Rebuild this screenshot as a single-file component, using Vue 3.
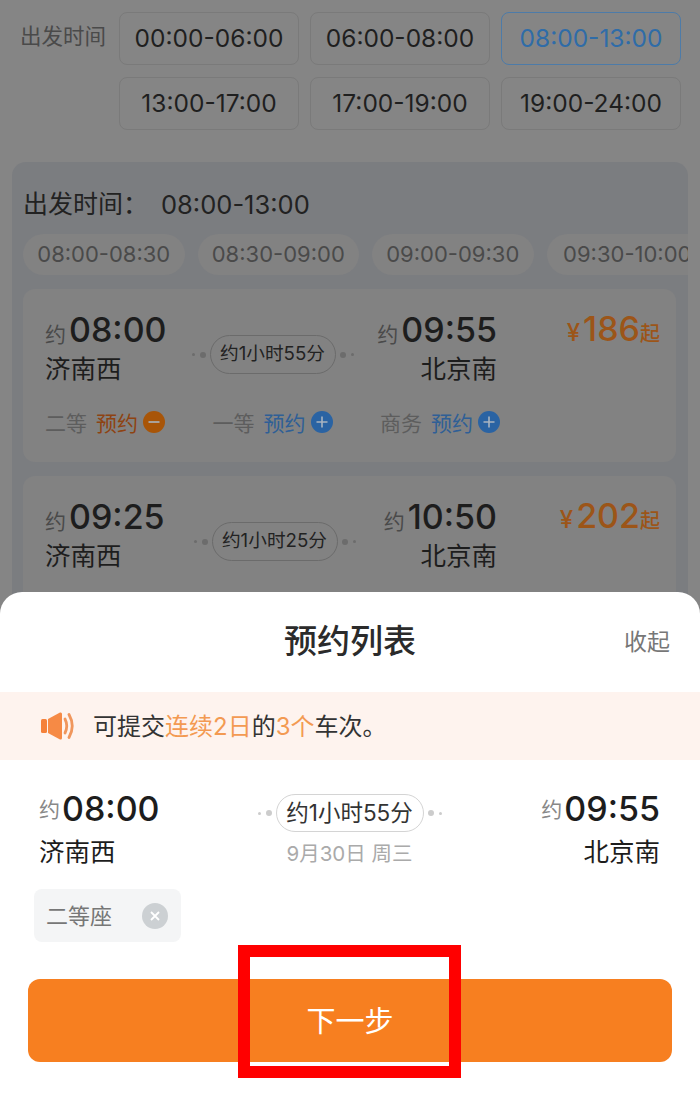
<script setup>
const slots = [
  { t: '00:00-06:00' }, { t: '06:00-08:00' }, { t: '08:00-13:00', on: true },
  { t: '13:00-17:00' }, { t: '17:00-19:00' }, { t: '19:00-24:00' }
]
const chips = ['08:00-08:30', '08:30-09:00', '09:00-09:30', '09:30-10:00']
const trains = [
  { dep: '08:00', arr: '09:55', dur: '约1小时55分', price: '186', seats: [
    { n: '二等', on: true }, { n: '一等' }, { n: '商务' }
  ] },
  { dep: '09:25', arr: '10:50', dur: '约1小时25分', price: '202', shift: true, seats: [] }
]
</script>

<template>
  <div class="page">
    <div class="filter">
      <div class="filter-label">出发时间</div>
      <div class="slots">
        <div v-for="s in slots" :key="s.t" class="slot" :class="{ on: s.on }">{{ s.t }}</div>
      </div>
    </div>

    <section class="panel">
      <div class="panel-title"><span>出发时间：</span><span>08:00-13:00</span></div>
      <div class="chips">
        <div v-for="c in chips" :key="c" class="chip">{{ c }}</div>
      </div>
      <article v-for="t in trains" :key="t.dep" class="card">
        <div class="route">
          <div class="stop">
            <div class="time"><small>约</small>{{ t.dep }}</div>
            <div class="station">济南西</div>
          </div>
          <div class="duration" :class="{ shift: t.shift }">
            <i class="dots"></i><span class="pill">{{ t.dur }}</span><i class="dots flip"></i>
          </div>
          <div class="stop end">
            <div class="time"><small>约</small>{{ t.arr }}</div>
            <div class="station">北京南</div>
          </div>
          <div class="price"><small class="yen">¥</small>{{ t.price }}<small>起</small></div>
        </div>
        <div v-if="t.seats.length" class="seats">
          <div v-for="s in t.seats" :key="s.n" class="seat" :class="{ on: s.on }">
            <span class="seat-name">{{ s.n }}</span>
            <span class="seat-act">预约</span>
            <svg class="seat-icon" viewBox="0 0 22 22">
              <circle cx="11" cy="11" r="11" :fill="s.on ? '#a85508' : '#2a63a3'" />
              <path :d="s.on ? 'M5.5 11h11' : 'M5.5 11h11M11 5.5v11'" stroke="#a9b4c0" stroke-width="1.6" fill="none" />
            </svg>
          </div>
        </div>
      </article>
    </section>

    <div class="sheet">
      <header class="sheet-head">
        <h2>预约列表</h2>
        <span class="collapse">收起</span>
      </header>
      <div class="notice">
        <svg class="speaker" viewBox="0 0 36 30">
          <rect x="1" y="8" width="6" height="14" rx="1.5" fill="#f5813a" />
          <path d="M8 8 L20 1.5 Q22 1 22 3 V27 Q22 29 20 28.5 L8 22 Z" fill="#f68a45" />
          <path d="M25 8 Q28.5 15 25 22" stroke="#f0965c" stroke-width="2.8" fill="none" stroke-linecap="round" />
          <path d="M29 3.5 Q35.5 15 29 26.5" stroke="#f0965c" stroke-width="2.8" fill="none" stroke-linecap="round" />
        </svg>
        <span>可提交<em>连续2日</em>的<em>3个</em>车次。</span>
      </div>
      <div class="trip">
        <div class="stop">
          <div class="time"><small>约</small>08:00</div>
          <div class="station">济南西</div>
        </div>
        <div class="trip-mid">
          <div class="duration big">
            <i class="dots"></i><span class="pill">约1小时55分</span><i class="dots flip"></i>
          </div>
          <div class="date">9月30日 周三</div>
        </div>
        <div class="stop end">
          <div class="time"><small>约</small>09:55</div>
          <div class="station">北京南</div>
        </div>
      </div>
      <div class="tag">
        <span>二等座</span>
        <svg class="tag-x" viewBox="0 0 26 26">
          <circle cx="13" cy="13" r="13" fill="#ccd0d3" />
          <path d="M9 9l8 8M17 9l-8 8" stroke="#fff" stroke-width="1.8" fill="none" />
        </svg>
      </div>
      <button class="next">下一步</button>
    </div>

    <div class="mark"></div>
  </div>
</template>

<style scoped>
.page {
  position: relative;
  width: 700px;
  height: 1100px;
  overflow: hidden;
  background: #858585;
  font-family: "Inter", "Noto Sans CJK SC", sans-serif;
  color: #222;
}
.filter {
  display: flex;
  padding: 12px 0 0 20px;
}
.filter-label {
  flex: 0 0 99px;
  padding-top: 9px;
  font-size: 21.5px;
  line-height: 30px;
  color: #4a4a4a;
  white-space: nowrap;
}
.slots {
  display: grid;
  grid-template-columns: 180px 180px 180px;
  grid-auto-rows: 53px;
  gap: 12px 11px;
}
.slot {
  display: flex;
  align-items: center;
  justify-content: center;
  box-sizing: border-box;
  border: 1.5px solid #7a7a7a;
  border-radius: 8px;
  padding-bottom: 2px;
  font-size: 24.5px;
  color: #1f1f1f;
}
.slot.on {
  color: #2f6ca8;
  border-color: #4d7ba8;
}
.panel {
  box-sizing: border-box;
  width: 676px;
  height: 600px;
  margin: 32px 0 0 12px;
  padding: 0 12px 0 11px;
  background: #7b7d80;
  border-radius: 14px;
  overflow: hidden;
}
.panel-title {
  display: flex;
  height: 72px;
  align-items: center;
  font-size: 25.5px;
  color: #222;
  box-sizing: border-box;
  padding-top: 12px;
}
.panel-title span:first-child {
  width: 138px;
  font-size: 25px;
  margin-top: -4px;
}
.chips {
  display: flex;
  gap: 13px;
  width: 665px;
  overflow: hidden;
  margin-right: -12px;
}
.chip {
  flex: 0 0 auto;
  box-sizing: border-box;
  width: 161.5px;
  height: 41px;
  line-height: 41px;
  text-align: center;
  border-radius: 21px;
  background: #828282;
  font-size: 22px;
  color: #4a4a4a;
}
.card {
  height: 173px;
  margin-top: 14px;
  padding: 0 22px;
  background: #828282;
  border-radius: 12px;
  box-sizing: border-box;
}
.route {
  display: flex;
  align-items: flex-start;
  padding-top: 20px;
}
.stop {
  width: 147px;
}
.stop.end {
  width: 142px;
  text-align: right;
}
.time {
  font-size: 34px;
  font-weight: 450;
  line-height: 42px;
  color: #1d1d1d;
  white-space: nowrap;
}
.time small {
  font-size: 21px;
  font-weight: 400;
  color: #4a4a4a;
  margin-right: 3px;
}
.station {
  font-size: 25.5px;
  line-height: 36px;
  margin-top: -5px;
  color: #1d1d1d;
}
.duration {
  display: flex;
  align-items: center;
  justify-content: center;
  width: 165px;
  margin: 26px 0 0 -2px;
  flex: 0 0 auto;
}
.duration.shift {
  margin: 26px -2px 0 0;
}
.dots {
  position: relative;
  display: block;
  width: 6px;
  height: 6px;
  border-radius: 50%;
  background: #6c6c6c;
  margin: 0 4px 0 9px;
}
.dots::before {
  content: "";
  position: absolute;
  left: -8px;
  top: 1.5px;
  width: 3px;
  height: 3px;
  border-radius: 50%;
  background: #6c6c6c;
}
.dots.flip {
  margin: 0 9px 0 4px;
}
.dots.flip::before {
  left: auto;
  right: -8px;
}
.pill {
  box-sizing: border-box;
  width: 126px;
  height: 39px;
  line-height: 36px;
  text-align: center;
  border: 1.5px solid #6b6b6b;
  border-radius: 20px;
  font-size: 18.7px;
  color: #222;
  white-space: nowrap;
}
.price {
  flex: 1;
  text-align: right;
  font-size: 34px;
  font-weight: 450;
  line-height: 40px;
  color: #9c5518;
  white-space: nowrap;
  margin-right: -6px;
}
.price small {
  font-size: 20px;
}
.price .yen {
  font-size: 24px;
  margin-right: 3px;
}
.seats {
  display: flex;
  margin-top: 20px;
}
.seat {
  display: flex;
  align-items: center;
  width: 167.5px;
  font-size: 21px;
  color: #5d5d5d;
}
.seat-act {
  margin-left: 9px;
  color: #2f5f96;
}
.seat.on .seat-act {
  color: #8e4312;
}
.seat-icon {
  width: 22px;
  height: 22px;
  margin-left: 5px;
}
.sheet {
  position: absolute;
  left: 0;
  right: 0;
  top: 592px;
  bottom: 0;
  background: #fff;
  border-radius: 22px 22px 0 0;
}
.sheet-head {
  position: relative;
  box-sizing: border-box;
  height: 100px;
  padding-bottom: 6px;
  display: flex;
  align-items: center;
  justify-content: center;
}
.sheet-head h2 {
  margin: 0;
  font-size: 33px;
  font-weight: 500;
  color: #2b2b2b;
}
.collapse {
  position: absolute;
  right: 30px;
  top: 34px;
  font-size: 23px;
  line-height: 33px;
  color: #777;
}
.notice {
  display: flex;
  align-items: center;
  height: 68px;
  padding-left: 40px;
  background: #fef3ee;
  font-size: 24px;
  color: #333;
}
.notice span {
  margin-top: -3px;
}
.notice em {
  font-style: normal;
  color: #f39a52;
}
.speaker {
  width: 36px;
  height: 30px;
  margin-right: 17px;
}
.trip {
  display: flex;
  justify-content: space-between;
  padding: 28px 40px 0 39px;
}
.trip .stop {
  width: 125px;
}
.trip .time small {
  color: #888;
  margin-right: 2px;
  position: relative;
  top: -4px;
}
.trip .station {
  margin-top: -1px;
}
.trip-mid {
  display: flex;
  flex-direction: column;
  align-items: center;
}
.duration.big {
  margin: 6px 0 0;
  width: auto;
}
.duration.big .pill {
  width: 148px;
  height: 38px;
  font-size: 22.5px;
  border-color: #d4d4d4;
  color: #333;
}
.duration.big .dots,
.duration.big .dots::before {
  background: #ccc;
}
.date {
  margin-top: 5px;
  font-size: 20.5px;
  line-height: 34px;
  color: #aaa;
}
.tag {
  display: flex;
  align-items: center;
  justify-content: space-between;
  box-sizing: border-box;
  width: 147px;
  height: 53px;
  margin: 18px 0 0 34px;
  padding: 0 13px 0 12px;
  background: #f4f5f6;
  border-radius: 8px;
  font-size: 22px;
  color: #777;
}
.tag span {
  margin-top: -4px;
}
.tag-x {
  width: 26px;
  height: 26px;
}
.next {
  display: block;
  width: 644px;
  height: 83px;
  margin: 37px 0 0 28px;
  padding: 0 0 4px;
  border: 0;
  border-radius: 12px;
  background: #f77f20;
  color: #fff;
  font-family: inherit;
  font-size: 29px;
}
.mark {
  position: absolute;
  left: 238px;
  top: 945px;
  width: 223px;
  height: 133px;
  box-sizing: border-box;
  border: 12px solid #f00;
}
</style>
